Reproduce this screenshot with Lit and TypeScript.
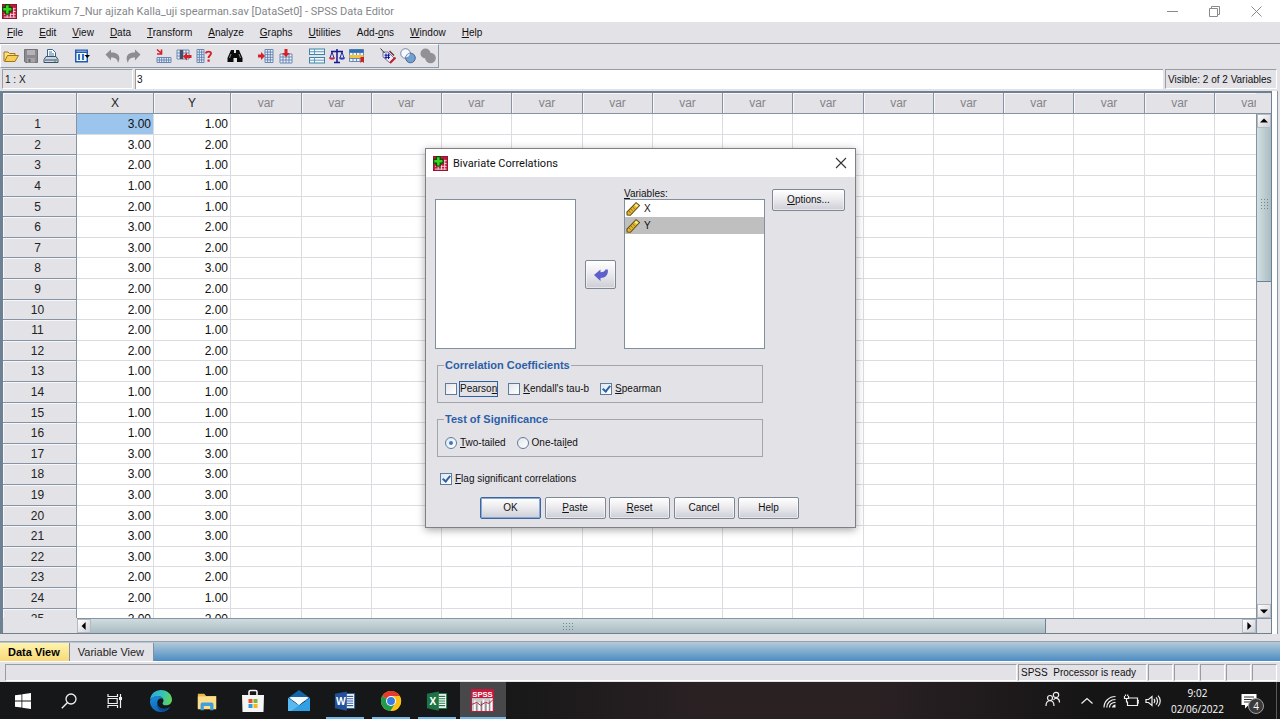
import { LitElement, html, css, svg, nothing, TemplateResult } from 'lit';
import { customElement, property } from 'lit/decorators.js';
import { classMap } from 'lit/directives/class-map.js';

const icon = (size: number, body: unknown, box = 16) =>
  html`<svg width=${size} height=${size} viewBox="0 0 ${box} ${box}" aria-hidden="true">${body}</svg>`;

const appIcon = svg`
  <rect x="0.5" y="0.5" width="15" height="15" fill="#c8143c" stroke="#8c1030"/>
  <path d="M2 11h12.500M2 14h12.500M12 5h2.500M12 8h2.500M12.500 4v10.500M9 10v4.500M5.500 11v3.500" stroke="#f6dfe4" stroke-width="1" fill="none"/>
  <path d="M3.700.7h4v3h3v4h-3v3h-4v-3h-3v-4h3z" fill="#35d81c" stroke="#0c4a0a" stroke-width="1.300"/>`;

const grid = (x: number, y: number, w: number, h: number, nx: number, ny: number, color = '#5b7fae') => {
  const v = Array.from({ length: nx + 1 }, (_, i) => `M${x + (w * i) / nx} ${y}v${h}`).join('');
  const r = Array.from({ length: ny + 1 }, (_, i) => `M${x} ${y + (h * i) / ny}h${w}`).join('');
  return svg`<rect x=${x} y=${y} width=${w} height=${h} fill="#eef3fa"/><path d=${v + r} stroke=${color} stroke-width="0.900" fill="none"/>`;
};

const ruler = svg`<path d="M1 11.500 11.500.8 15.500 4 5 15.200 1.300 14.800z" fill="#e3b62c" stroke="#5d4a14" stroke-width="1.200"/>
  <path d="M11.500 1.800l2.800 2.200-1.800 2-2.800-2.400z" fill="#f6ee86"/>
  <path d="M3.500 10.500l2 1.700M5.700 8.200l2 1.700M7.900 6l2 1.700" stroke="#7a6118" stroke-width="0.900"/>`;

interface Tool { name: string; art: TemplateResult }

const toolGroups: Tool[][] = [
  [
    { name: 'Open', art: svg`<path d="M1 13V4h4l1.500 1.500H12V8" fill="#fbe08a" stroke="#a3761a"/><path d="M1.500 13.500 4.500 7.500H15.500L12 13.500z" fill="#f7cf56" stroke="#a3761a"/>` },
    { name: 'Save', art: svg`<path d="M1.500 1.500h13v13h-12l-1-1z" fill="#8b8b8f" stroke="#747478"/><rect x="4" y="2" width="8" height="5" fill="#b4b4b8"/><rect x="4" y="10" width="8" height="4.500" fill="#a4a4a8"/><rect x="5.500" y="11" width="2" height="3" fill="#6a6a6e"/>` },
    { name: 'Print', art: svg`<path d="M4.500 9V1.500h5l3 3V9z" fill="#fff" stroke="#37648f"/><path d="M6 4h3M6 6h5M6 8h5" stroke="#3f78b8"/><path d="M3 8.500h10l2 3v3H1v-3z" fill="#cdd6e0" stroke="#39506a"/><path d="M2 12h12" stroke="#39506a"/><rect x="11" y="12.500" width="2" height="1.200" fill="#3fae3a"/>` },
  ],
  [
    { name: 'Recall dialog', art: svg`<rect x="1" y="1.500" width="13" height="13" fill="#1f5cae"/><rect x="2.500" y="5" width="10" height="8" fill="#fff"/><path d="M5 6v6M9 6v6" stroke="#2f6fc4" stroke-width="2.200"/><path d="M2.500 3.200h10" stroke="#9fc2ec"/><path d="M10.500 7h5.500l-2.700 3z" fill="#000"/>` },
  ],
  [
    { name: 'Undo', art: svg`<path d="M0.500 6.500 6 1.500V4.500C13 4 16.500 8.500 13 15 12.500 11 10.500 9.500 6 9.500v3z" fill="#8d8d91"/>` },
    { name: 'Redo', art: svg`<path d="M15.500 6.500 10 1.500V4.500C3 4-.5 8.500 3 15 3.500 11 5.500 9.500 10 9.500v3z" fill="#8d8d91"/>` },
  ],
  [
    { name: 'Go to case', art: svg`${grid(1, 9.5, 14, 5, 6, 2)}<path d="M1 1.500 5 5M5.500 1.500v4.500H1" stroke="#d61f26" stroke-width="1.600" fill="none"/>` },
    { name: 'Go to variable', art: svg`${grid(1, 2, 12, 9, 4, 3)}<rect x="4" y="2" width="3" height="9" fill="#4c4c60"/><path d="M7 8.500 11 4.500V7h4.500v3H11v2.500z" fill="#d61f26"/>` },
    { name: 'Variables', art: svg`${grid(1, 1.5, 7, 13, 3, 5)}<path d="M10 5.500C10 3 15 3 15 5.500c0 2-2.500 2-2.500 4.500" stroke="#d61f26" stroke-width="1.900" fill="none"/><rect x="11.500" y="11.500" width="2.200" height="2.200" fill="#d61f26"/>` },
  ],
  [
    { name: 'Find', art: svg`<path d="M4 2h3v3h2V2h3l3.500 8v4H10v-4H6.500v4H0.500v-4z" fill="#0b0b0b"/><path d="M4 6 2.500 10M12 6l1.500 4" stroke="#9a9a9a" stroke-width="0.900"/>` },
  ],
  [
    { name: 'Insert case', art: svg`${grid(7, 1.5, 8, 13, 3, 5)}<path d="M0 6.500h3V4l4 4-4 4V9.500H0z" fill="#d61f26"/>` },
    { name: 'Insert variable', art: svg`${grid(2, 6, 12, 9, 4, 3)}<path d="M6.500 1h3v4H12l-4 4-4-4h2.500z" fill="#d61f26"/>` },
  ],
  [
    { name: 'Split file', art: svg`<rect x="0.500" y="1" width="15" height="5.500" fill="#f1f7fb" stroke="#3f83a8"/><rect x="0.500" y="9.500" width="15" height="5.500" fill="#f1f7fb" stroke="#3f83a8"/><path d="M5.500 1v5.500M5.500 9.500V15M1 3.700h14M1 12.200h14" stroke="#5f9cbd"/>` },
    { name: 'Weight cases', art: svg`<path d="M8 1v13M2 3.500h12M5 14.500h6" stroke="#17178f" stroke-width="1.500"/><path d="M3 4 1 10M3 4l2 6M13 4l-2 6M13 4l2 6" stroke="#17178f" stroke-width="0.900"/><path d="M0 9.500h6c0 3-6 3-6 0z" fill="#c4283a"/><path d="M10 9.500h6c0 3-6 3-6 0z" fill="#2b3fb5"/>` },
    { name: 'Select cases', art: svg`${grid(0.5, 1.5, 14, 12, 4, 4)}<rect x="0.500" y="1.500" width="14" height="3" fill="#2c6fb3"/><rect x="0.500" y="7" width="14" height="3" fill="#f2c23c"/><path d="M11.500 9h3.500v6l-1.700-1.500-1.800 1.500z" fill="#cf2027"/>` },
  ],
  [
    { name: 'Value labels', art: svg`<path d="M3 4h5l6 6-4.500 4.500L3 9z" fill="#e8eaf6" stroke="#77779a"/><path d="M0.500 0.500 4.500 5" stroke="#333"/><path d="M6 5.500v5.500M8.500 5.500v5.500M4.500 7.200h5.500M4.500 9.400h5.500" stroke="#15159a"/><path d="M15.500 9.500 10 15" stroke="#c2202a" stroke-width="2"/><path d="M9.500 3l4.500 4.500" stroke="#6a2a2a" stroke-width="1.200"/>` },
    { name: 'Use variable sets', art: svg`<circle cx="5.500" cy="5.500" r="4.800" fill="#f7f9fc" stroke="#6f87a2"/><circle cx="10.500" cy="10" r="4.800" fill="#5f93cf" fill-opacity="0.850" stroke="#46698f"/><path d="M6 9.500a4.800 4.800 0 0 1 4-4.300 4.800 4.800 0 0 1-4 4.300z" fill="#e2ecf7"/>` },
    { name: 'Show all variables', art: svg`<circle cx="5.500" cy="5.500" r="5" fill="#929296"/><circle cx="10.500" cy="10" r="5.300" fill="#929296"/>` },
  ],
];

@customElement('spss-menu-bar')
class SpssMenuBar extends LitElement {
  static styles = css`
    :host { display: block; }
    .bar { display: flex; height: 21px; padding: 0 7px; gap: 16px; align-items: center; border-bottom: 1px solid #8d9297; }
    .item { border: 0; background: none; padding: 0; font: 10px 'Liberation Sans', Arial, sans-serif; color: #111; }
  `;
  render() {
    const menus = [['', 'F', 'ile'], ['', 'E', 'dit'], ['', 'V', 'iew'], ['', 'D', 'ata'], ['', 'T', 'ransform'], ['', 'A', 'nalyze'],
      ['', 'G', 'raphs'], ['', 'U', 'tilities'], ['Add-', 'o', 'ns'], ['', 'W', 'indow'], ['', 'H', 'elp']];
    return html`<nav class="bar">${menus.map(([a, k, b]) => html`<button class="item">${a}<u>${k}</u>${b}</button>`)}</nav>`;
  }
}

@customElement('spss-toolbar')
class SpssToolbar extends LitElement {
  static styles = css`
    :host { display: flex; }
    .bar { display: flex; gap: 11px; height: 22px; padding: 0; border: 1px solid #8a9cac; border-left-color: #fff; border-top-color: #fff; }
    .group { display: flex; }
    .tool { width: 20px; height: 22px; padding: 0; border: 0; background: none; display: grid; place-items: center; }
  `;
  render() {
    return html`<div class="bar" role="toolbar">${toolGroups.map(g => html`<div class="group">
      ${g.map(t => html`<button class="tool" aria-label=${t.name}>${icon(16, t.art)}</button>`)}</div>`)}</div>`;
  }
}

const xs = [3, 3, 2, 1, 2, 3, 3, 3, 2, 2, 2, 2, 1, 1, 1, 1, 3, 3, 3, 3, 3, 3, 2, 2, 2];
const ys = [1, 2, 1, 1, 1, 2, 2, 3, 2, 2, 1, 2, 1, 1, 1, 1, 3, 3, 3, 3, 3, 3, 2, 1, 2];
const spare = Array.from({ length: 15 });

@customElement('spss-data-grid')
class SpssDataGrid extends LitElement {
  static styles = css`
    :host { display: grid; grid-template: minmax(0, 1fr) 15px / minmax(0, 1fr) 15px; font: 12px 'Liberation Sans', Arial, sans-serif;
      border: solid #6e8193; border-width: 2px 1px 1px 3px; background: #e3e2e7; min-height: 0; }
    .view { overflow: hidden; background: #fff; }
    .sheet { table-layout: fixed; border-collapse: separate; border-spacing: 0; width: 1282px; line-height: 16px; }
    .c-row { width: 74px; } .c-val { width: 77px; } .c-var { width: 70px; } .c-var:nth-child(4n) { width: 71px; }
    tr { height: 21px; }
    tbody tr:nth-child(5n + 2), tbody tr:nth-child(5n + 5) { height: 20px; }
    th, td { padding: 0; box-sizing: border-box; }
    th { font-weight: normal; background: #e3e2e7; border: solid #8494a4; border-width: 0 1px 1px 0; text-align: center; color: #222;
      box-shadow: inset 1px 1px #f7f7fa; }
    .lead { padding-right: 4px; }
    .empty { color: #858589; }
    td { border: solid #dcdce0; border-width: 0 1px 1px 0; text-align: right; padding-right: 2px; color: #111; }
    .on { background: #9bc5ec; }
    .side { display: flex; flex-direction: column; }
    .cap { height: 20px; border-bottom: 1px solid #8494a4; }
    .vbar { flex: 1; display: flex; flex-direction: column; border-left: 1px solid #8494a4; }
    .hrow { display: flex; padding-left: 74px; }
    .hbar { flex: 1; display: flex; border-top: 1px solid #8494a4; }
    .arrow { width: 14px; height: 14px; padding: 0; display: grid; place-items: center; border: 1px solid #b3bac2;
      background: linear-gradient(135deg, #fff, #cfd0d6); }
    .thumb-v { height: 153px; background: linear-gradient(90deg, #d3dfe1, #a9bcc2); border-bottom: 1px solid #6e8193; display: grid; place-items: center; }
    .thumb-h { flex: 955; background: linear-gradient(#d0dcde, #a9bcc2); border-right: 1px solid #6e8193; display: grid; place-items: center; }
    .grip { width: 13px; height: 9px; background: radial-gradient(circle, #6c8791 25%, transparent 35%) 0 0 / 3px 3px; }
    .thumb-v .grip { width: 9px; height: 13px; }
    .track { flex: 196; }
    .vbar .track { flex: 1; }
    .corner { border: solid #8494a4; border-width: 1px 0 0 1px; }
  `;
  private arrow(name: string, d: string) {
    return html`<button class="arrow" aria-label=${name}>${icon(8, svg`<path d=${d} fill="#000"/>`, 10)}</button>`;
  }
  render() {
    return html`
      <div class="view">
        <table class="sheet">
          <colgroup><col class="c-row"><col class="c-val"><col class="c-val">${spare.map(() => html`<col class="c-var">`)}</colgroup>
          <thead><tr><th></th><th>X</th><th>Y</th>${spare.map(() => html`<th class="empty">var</th>`)}</tr></thead>
          <tbody>${xs.map((x, i) => html`<tr><th scope="row" class="lead">${i + 1}</th>
            <td class=${classMap({ on: i === 0 })}>${x.toFixed(2)}</td><td>${ys[i].toFixed(2)}</td>${spare.map(() => html`<td></td>`)}</tr>`)}</tbody>
        </table>
      </div>
      <div class="side"><div class="cap"></div>
        <div class="vbar">${this.arrow('Scroll up', 'M0 7 5 2l5 5z')}<div class="thumb-v"><div class="grip"></div></div><div class="track"></div>${this.arrow('Scroll down', 'M0 3h10L5 8z')}</div>
      </div>
      <div class="hrow"><div class="hbar">${this.arrow('Scroll left', 'M7 0v10L2 5z')}<div class="thumb-h"><div class="grip"></div></div><div class="track"></div>${this.arrow('Scroll right', 'M3 0v10l5-5z')}</div></div>
      <div class="corner"></div>`;
  }
}

@customElement('correlations-dialog')
class CorrelationsDialog extends LitElement {
  static styles = css`
    :host { display: block; box-sizing: border-box; width: 431px; background: #e3e2e7; border: 1px solid #7d8084; color: #111;
      box-shadow: 0 2px 8px rgba(0, 0, 0, 0.35); font: 10px/14px 'Liberation Sans', Arial, sans-serif; }
    .title { display: flex; align-items: center; gap: 5px; height: 28px; padding: 0 8px 0 7px; background: #fff; font: 11px Roboto, 'Noto Sans', sans-serif; }
    .name { flex: 1; }
    .close { border: 0; background: none; padding: 0; display: grid; }
    .body { padding: 10px 9px 8px; }
    .top { display: flex; align-items: flex-start; }
    .list { box-sizing: border-box; width: 141px; height: 150px; margin: 12px 0 0; padding: 0; list-style: none; background: #fff; border: 1px solid #8090a0; }
    .target { margin: 0 7px 0 8px; }
    .caption { display: block; height: 12px; }
    .target .list { margin: 0; }
    .entry { display: flex; align-items: center; gap: 4px; height: 17px; padding: 0 1px; }
    .chosen { background: #bfbfbf; }
    .btn { box-sizing: border-box; height: 22px; width: 61px; padding: 0; font: inherit; color: #111; border: 1px solid #7d8795; border-radius: 2px;
      background: linear-gradient(#fff, #eeeef1 40%, #cdced6); box-shadow: inset 0 0 0 1px rgba(255, 255, 255, 0.5); }
    .options { width: 73px; margin-top: 2px; }
    .move { width: 31px; height: 29px; margin: 73px 0 0 9px; display: grid; place-items: center; }
    .ok { border-color: #3e669c; box-shadow: inset 0 0 0 1px #86a8d6; }
    .group { box-sizing: border-box; width: 326px; margin: 9px 0 0 2px; padding: 10px 7px 6px; border: 1px solid #a3a5aa; display: block; min-width: 0; }
    .legend { font-size: 11px; font-weight: bold; color: #2c5fa8; line-height: 14px; padding: 0 1px; margin-left: -1px; }
    .picks { display: flex; gap: 11px; }
    .pick { display: flex; align-items: center; gap: 3px; height: 14px; }
    .pick input { appearance: none; margin: 0; box-sizing: border-box; width: 12px; height: 12px; border: 1px solid #5f7b9c; background: linear-gradient(135deg, #e4e6ea, #fff); display: grid; place-items: center; }
    .pick input:checked { background: linear-gradient(135deg, #dce8f5, #fff); }
    .pick input[type='checkbox']:checked::before { content: ''; width: 3px; height: 6px; border: solid #2f62a8; border-width: 0 2px 2px 0; transform: rotate(40deg); margin-bottom: 2px; }
    .pick input[type='radio'] { border-radius: 50%; }
    .pick input[type='radio']:checked::before { content: ''; width: 4px; height: 4px; border-radius: 50%; background: #4478b8; }
    .focus { outline: 1px solid #2f5f9f; }
    .flag { margin: 15px 0 11px 5px; }
    .actions { display: flex; justify-content: space-between; width: 319px; margin-left: 45px; }
  `;
  private pick(id: string, type: string, checked: boolean, text: [string, string, string], focus = false) {
    return html`<div class="pick"><input id=${id} type=${type} name=${type === 'radio' ? 'tails' : nothing} ?checked=${checked}>
      <label for=${id} class=${classMap({ focus })}>${text[0]}<u>${text[1]}</u>${text[2]}</label></div>`;
  }
  render() {
    return html`
      <div class="title">${icon(15, appIcon)}<span class="name">Bivariate Correlations</span>
        <button class="close" aria-label="Close">${icon(12, svg`<path d="M1 1l10 10M11 1 1 11" stroke="#333" stroke-width="1.100"/>`, 12)}</button></div>
      <div class="body">
        <div class="top">
          <ul class="list" role="listbox" aria-label="Available variables"></ul>
          <button class="btn move" aria-label="Move">${icon(16, svg`<path d="M1 8 7.500 2.500v2.800C10.500 5.300 12 4 12.500 2.500h2.300C15.500 8 12.500 11 7.500 11v3z" fill="#5f5fcb"/>`)}</button>
          <div class="target"><span class="caption" id="vars"><u>V</u>ariables:</span>
            <ul class="list" role="listbox" aria-labelledby="vars">
              ${['X', 'Y'].map((v, i) => html`<li role="option" aria-selected=${i === 1} class=${classMap({ entry: true, chosen: i === 1 })}>${icon(14, ruler)}${v}</li>`)}
            </ul></div>
          <button class="btn options"><u>O</u>ptions...</button>
        </div>
        <fieldset class="group"><legend class="legend">Correlation Coefficients</legend>
          <div class="picks">${this.pick('p', 'checkbox', false, ['Pearso', 'n', ''], true)}${this.pick('k', 'checkbox', false, ['', 'K', "endall's tau-b"])}${this.pick('s', 'checkbox', true, ['', 'S', 'pearman'])}</div>
        </fieldset>
        <fieldset class="group"><legend class="legend">Test of Significance</legend>
          <div class="picks">${this.pick('t', 'radio', true, ['', 'T', 'wo-tailed'])}${this.pick('o', 'radio', false, ['One-tai', 'l', 'ed'])}</div>
        </fieldset>
        <div class="flag">${this.pick('f', 'checkbox', true, ['', 'F', 'lag significant correlations'])}</div>
        <div class="actions"><button class="btn ok">OK</button><button class="btn"><u>P</u>aste</button><button class="btn"><u>R</u>eset</button><button class="btn">Cancel</button><button class="btn">Help</button></div>
      </div>`;
  }
}

const windows = svg`<path d="M0 2.300 6.500 1.400V7.600H0zM7.300 1.300 16 0V7.600H7.300zM0 8.400H6.500V14.600L0 13.700zM7.300 8.400H16V16L7.300 14.700z" fill="#fff"/>`;
const search = svg`<circle cx="10" cy="6" r="5" fill="none" stroke="#f0f0f0" stroke-width="1.300"/><path d="M6.300 9.700.8 15.200" stroke="#f0f0f0" stroke-width="1.400"/>`;
const taskView = svg`<path d="M1 1v2.500h9.500V1M1 15v-2.500h9.500V15M1.200 5.500h9v5h-9zM13.500 1v14" stroke="#f0f0f0" stroke-width="1.200" fill="none"/><rect x="12" y="4" width="3" height="3" fill="#f0f0f0"/>`;
const edge = svg`<defs>
    <linearGradient id="eg" x1="0" y1="0.200" x2="1" y2="0.400"><stop offset="0" stop-color="#2ba7e0"/><stop offset="0.550" stop-color="#36c3b4"/><stop offset="1" stop-color="#5fd35f"/></linearGradient>
    <linearGradient id="eb" x1="0" y1="0" x2="0.600" y2="1"><stop offset="0" stop-color="#1b8fdb"/><stop offset="1" stop-color="#0d5fb4"/></linearGradient></defs>
  <path d="M1 11C1.500 4.500 6.500 1 12 1c6.500 0 11 4.500 11 9.500 0 4-3 5.800-6 5.800-2.500 0-3.500-1-3.500-1.800 0-.7 1-1.200 1-3C14.500 9 12 7.200 9 7.200 5 7.200 2 9 1 11z" fill="url(#eg)"/>
  <path d="M1 12C2 8.500 5 7 8.800 7 11.500 7 13.500 8.300 14.200 10 10 8.500 8 11.500 8.300 14.200 8.600 18 12.500 20.500 16.500 19.800c2-.3 3.700-1 4.800-2C19 21.500 15.500 23 12 23 5.500 23 .7 18 1 12z" fill="url(#eb)"/>
  <path d="M8.300 14.200c.3 3.800 4.200 6.300 8.200 5.600 2-.3 3.500-1 4.800-2-1.700 2.500-4.300 4.500-7.300 5C9.500 21.500 7 17.500 8.300 14.200z" fill="#0b4a94"/>`;
const folder = svg`<path d="M2 4h7l2 2.500h11V20H2z" fill="#e9b64a"/><path d="M2 7h20v14H2z" fill="#fbdd8a"/><path d="M5 22v-6.500c0-1 .8-2 2-2h10c1.200 0 2 1 2 2V22h-3.500v-4.500h-7V22z" fill="#3f9fdc"/>`;
const store = svg`<path d="M8 6V3c0-1 .5-1.500 1.500-1.500h5c1 0 1.500.500 1.500 1.500v3" fill="none" stroke="#f5f5f5" stroke-width="1.600"/><path d="M1 6h22l-.5 17h-21z" fill="#f5f5f5"/>
  <path d="M7.500 10h4v4h-4z" fill="#e8512a"/><path d="M12.500 10h4v4h-4z" fill="#7db72f"/><path d="M7.500 15h4v4h-4z" fill="#2a9de0"/><path d="M12.500 15h4v4h-4z" fill="#f5b71c"/>`;
const mail = svg`<path d="M1 9 12 1l11 8v3H1z" fill="#1464a8"/><path d="M3 8h18l-9 8z" fill="#fff"/><path d="M1 9l11 7.500L23 9v13H1z" fill="#2f9fe6"/><path d="M1 9l11 7.500L4 22H1z" fill="#57b9f0"/><path d="M2 8.500h20L12 16z" fill="#f5f9fd"/>`;
const doc = (color: string, dark: string, letter: string) => svg`<rect x="12" y="4" width="10.500" height="16" fill="#fff" stroke=${color}/>
  <path d="M14 7h7M14 9.500h7M14 12h7M14 14.500h7M14 17h7" stroke=${color} stroke-width="1.200"/><path d="M1 4 14 1.500v21L1 20z" fill=${dark}/>
  <text x="7.500" y="16" text-anchor="middle" font-family="Open Sans, sans-serif" font-weight="700" font-size="11" fill="#fff">${letter}</text>`;
const chrome = svg`<circle cx="12" cy="12" r="11" fill="#fbc116"/><path d="M12 12 2.470 6.500A11 11 0 0 1 21.530 6.500H12z" fill="#e33b2e"/>
  <path d="M2.470 6.500A11 11 0 0 0 11.500 23L16.700 14.700 12 12z" fill="#229a4c"/><path d="M12 6.500h9.530A11 11 0 0 1 11.500 23l5-8.300z" fill="#fbc116"/><circle cx="12" cy="12" r="5.400" fill="#fff"/><circle cx="12" cy="12" r="4.300" fill="#3a79e8"/>`;
const spss = svg`<rect x="0.500" y="0.500" width="23" height="23" fill="#c9c9cc" stroke="#c2183a"/><rect x="0.500" y="0.500" width="23" height="9" fill="#c9183c"/>
  <text x="12" y="8" text-anchor="middle" font-family="Liberation Sans, sans-serif" font-weight="700" font-size="8" fill="#fff">SPSS</text>
  <path d="M4 12v11M8.500 14v9M13 11v12M17.500 13v10M21 10v13" stroke="#fff" stroke-width="1.600"/><path d="M6 15v8M11 13v10M15.500 15v8M19.500 12v11" stroke="#77777c" stroke-width="1"/><path d="M1 16l5-2 4 3 5-3 4 1 4-4" stroke="#c2183a" fill="none"/>`;

@customElement('task-bar')
class TaskBar extends LitElement {
  static styles = css`
    :host { display: flex; height: 37px; background: linear-gradient(90deg, #161718 0 38%, #2a2123 55% 68%, #161516 85%); color: #fff; font: 10px/16px 'Open Sans', 'Noto Sans', sans-serif; }
    .app { box-sizing: border-box; width: 46px; height: 37px; padding: 0 1px 0 0; border: 0; background: none; display: grid; place-items: center; }
    .open { background: linear-gradient(#76b9ed, #76b9ed) 50% 100% / 38px 2px no-repeat; }
    .active { background: linear-gradient(#76b9ed, #76b9ed) 0 100% / 46px 2px no-repeat #48484a; }
    .tray { margin-left: auto; display: flex; align-items: center; gap: 6px; }
    .person { margin-right: 12px; }
    .clock { text-align: center; margin: 0 4px; }
    .note { position: relative; display: grid; padding: 0 13px 0 7px; }
    .badge { position: absolute; left: 14px; top: 5px; width: 14px; height: 14px; border-radius: 50%; border: 1px solid #a0a0a0; background: #3a3a3c; font-size: 10px; line-height: 14px; text-align: center; }
    .edge { width: 3px; height: 37px; border-left: 1px solid #5a5a5c; }
  `;
  render() {
    const apps: [string, unknown, number, number, string][] = [
      ['Start', windows, 16, 16, ''], ['Search', search, 16, 16, ''], ['Task View', taskView, 16, 16, ''], ['Edge', edge, 24, 24, ''],
      ['File Explorer', folder, 22, 24, ''], ['Store', store, 24, 24, ''], ['Mail', mail, 24, 24, ''], ['Word', doc('#2c5aa4', '#23509b', 'W'), 22, 24, 'open'],
      ['Chrome', chrome, 22, 24, 'open'], ['Excel', doc('#1f7a48', '#1c7243', 'X'), 22, 24, 'open'], ['SPSS', spss, 23, 24, 'active']];
    const line = (d: string) => svg`<path d=${d} stroke="#f0f0f0" stroke-width="1.200" fill="none"/>`;
    return html`
      ${apps.map(([name, art, size, box, state]) => html`<button class="app ${state}" aria-label=${name}>${icon(size, art, box)}</button>`)}
      <div class="tray">
        <span class="person">${icon(16, svg`<circle cx="5" cy="7" r="2.500" fill="none" stroke="#eee" stroke-width="1.200"/><circle cx="11" cy="4" r="2.700" fill="none" stroke="#eee" stroke-width="1.200"/>${line('M1 15c0-7 8-7 8 0M8.500 9c2-3 6-2 6 2.500')}`)}</span>
        ${icon(16, line('M2.500 10.500 8 5.500l5.500 5'))}
        ${icon(16, svg`${line('M3 14.500C3 8.500 8 3.500 14.500 3.500M5.800 14.500C5.800 10 9.500 6.500 14.500 6.500M8.500 14.500C8.500 11.500 11 9.300 14.500 9.300')}<path d="M11 14.500c0-1.500 1.500-3 3.500-3v3z" fill="#eee"/>`)}
        ${icon(16, line('M6 5h8.500v7.500H4.500V9M14.500 7.500H16v2.500h-1.500M1.500 3v2.500h4V3M2.500 1.500V3M4.700 1.500V3M3.500 5.500V9H5'))}
        ${icon(16, line('M1 6.500h2.500L7 3.500v9L3.500 9.500H1zM9 6c1 1.200 1 2.800 0 4M11 4.300c2 2 2 5.400 0 7.400M13 2.700c3 3 3 7.600 0 10.600'))}
        <div class="clock">9:02<br>02/06/2022</div>
        <span class="note">${icon(16, svg`<path d="M0.500 1h15v11h-8l-3.500 3.500V12H.5z" fill="#fff"/><path d="M3 4h10M3 6.500h10M3 9h7" stroke="#333" stroke-width="1.100"/>`)}<span class="badge">4</span></span>
        <span class="edge"></span>
      </div>`;
  }
}

@customElement('app-root')
class AppRoot extends LitElement {
  @property() file = 'praktikum 7_Nur ajizah Kalla_uji spearman.sav [DataSet0] - SPSS Data Editor';

  static styles = css`
    :host { display: flex; flex-direction: column; height: 100vh; min-height: 700px; overflow: hidden; position: relative; background: #e3e2e7;
      font: 10px 'Liberation Sans', Arial, sans-serif; color: #111; }
    .title { display: flex; align-items: center; height: 22px; padding: 0 18px 0 2px; gap: 5px; background: #fff; color: #84868a; font: 11px Roboto, 'Noto Sans', sans-serif; }
    .name { flex: 1; }
    .window { display: flex; gap: 31px; }
    .win { border: 0; padding: 0; background: none; display: grid; }
    .cellbar { display: flex; height: 20px; padding: 1px 3px 2px 2px; gap: 2px; }
    .where, .count { box-sizing: border-box; border: 1px solid #9a9ca3; border-right-color: #fff; border-bottom-color: #fff; line-height: 19px; padding: 0 2px; }
    .where { width: 131px; }
    .count { width: 112px; }
    .entry { flex: 1; min-width: 0; margin: 0; border: 1px solid #9a9ca3; border-right: 0; border-bottom: 0; padding: 0 1px; background: #fff; font: inherit; color: #111; }
    .work { flex: 1; display: grid; grid-template: minmax(0, 1fr) / minmax(0, 1fr); min-height: 0; padding-right: 5px; margin-right: 2px; border-right: 1px solid #8494a4; background: #fff; }
    .views { display: flex; height: 18px; margin-top: 7px; border-top: 1px solid #9aa0a8; padding-top: 1px; background: linear-gradient(#b2cbd8, #4c8cc4); }
    .view { border: 0; border-right: 1px solid #7f8fa0; padding: 0 9px 0 8px; font: 11px 'Liberation Sans', Arial, sans-serif; background: #e3e2e7; color: #222; }
    .current { background: linear-gradient(#fff3ad, #f8d978); font-weight: bold; color: #000; }
    .status { display: flex; gap: 1px; height: 17px; padding: 2px 3px 1px 5px; border-top: 1px solid #fff; line-height: 15px; }
    .pane { box-sizing: border-box; width: 25px; border: 1px solid #9a9ca3; border-right-color: #fff; border-bottom-color: #fff; }
    .wide { flex: 1; }
    .ready { width: 129px; padding-left: 2px; white-space: pre; }
    .dialog { position: absolute; left: calc(50% - 215px); top: 148px; }
  `;
  render() {
    const g = (d: string) => icon(11, svg`<path d=${d} fill="none" stroke="#8a8a8e"/>`, 11);
    return html`
      <header class="title">${icon(15, appIcon)}<span class="name">${this.file}</span>
        <div class="window"><button class="win" aria-label="Minimize">${g('M0 5.500h11')}</button><button class="win" aria-label="Restore">${g('M.5 2.500h8v8h-8zM2.500 2.500V.5h8v8h-2')}</button><button class="win" aria-label="Close">${g('M.5.5l10 10M10.500.5l-10 10')}</button></div>
      </header>
      <spss-menu-bar></spss-menu-bar>
      <spss-toolbar></spss-toolbar>
      <div class="cellbar"><div class="where">1 : X</div><input class="entry" aria-label="Cell value" value="3"><div class="count">Visible: 2 of 2 Variables</div></div>
      <main class="work"><spss-data-grid></spss-data-grid></main>
      <div class="views"><button class="view current">Data View</button><button class="view">Variable View</button></div>
      <footer class="status"><div class="pane wide"></div><div class="pane ready">SPSS  Processor is ready</div>${[1, 2, 3, 4, 5].map(() => html`<div class="pane"></div>`)}</footer>
      <task-bar></task-bar>
      <correlations-dialog class="dialog" role="dialog"></correlations-dialog>`;
  }
}
